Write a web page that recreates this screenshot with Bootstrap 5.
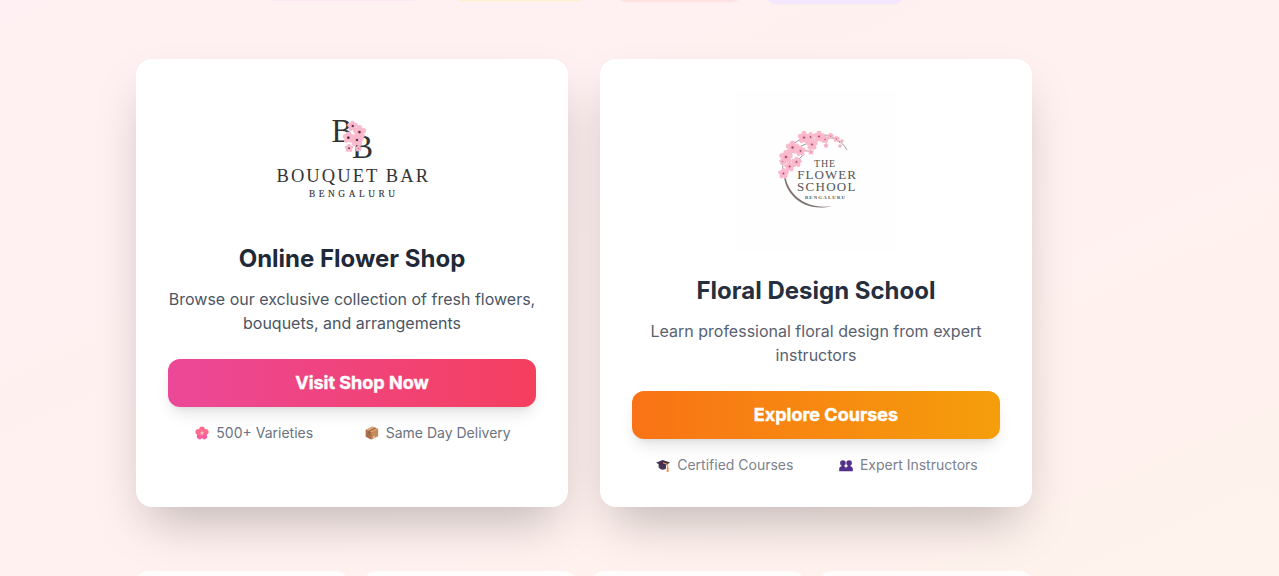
<!DOCTYPE html>
<html lang="en">
<head>
<meta charset="utf-8">
<meta name="viewport" content="width=device-width, initial-scale=1">
<title>Bouquet Bar Bengaluru</title>
<link href="https://cdn.jsdelivr.net/npm/bootstrap@5.3.0/dist/css/bootstrap.min.css" rel="stylesheet">
<style>
  body { font-family: Inter, sans-serif; background: linear-gradient(155deg, #fff0f3 0%, #fff1f0 45%, #fff3ed 100%); height: 576px; overflow: hidden; color: #1f2937; }
  .page-wrap { width: 896px; margin-left: 136px; }
  .tag-row { height: 59px; gap: 32px; padding-left: 128px; }
  .tag { height: 40px; border-radius: 12px; box-shadow: 0 1px 2px rgba(0,0,0,.02); }
  .tag-pink { width: 159px; margin-top: -39px; background: #fce7f3; }
  .tag-yellow { width: 140px; margin-top: -39px; margin-left: -5px; background: #fef0c7; }
  .tag-red { width: 128px; margin-top: -38px; background: #ffe1e2; margin-left: -7px; }
  .tag-purple { width: 140px; margin-top: -36px; background: #f3e8ff; margin-left: -10px; }
  .tag-pink, .tag-yellow { box-shadow: none; }
  .offer { width: 432px; height: 448px; padding: 32px; border: 0; border-radius: 16px; box-shadow: 0 25px 50px -12px rgba(0,0,0,.25); }
  .offer h2 { font-size: 24px; line-height: 32px; font-weight: 700; margin: 24px 0 12px; }
  .offer p { font-size: 16px; line-height: 24px; color: #4b5563; margin: 0 0 24px; }
  .offer .btn { height: 48px; border: 0; border-radius: 12px; color: #fff; font-size: 18px; line-height: 28px; font-weight: 700; -webkit-text-stroke: .4px #fff; padding: 10px 0 10px 20px; box-shadow: 0 10px 15px -3px rgba(0,0,0,.1), 0 4px 6px -4px rgba(0,0,0,.1); }
  .btn-shop { background: linear-gradient(90deg, #ec4899, #f43f5e); }
  .btn-school { background: linear-gradient(90deg, #f97316, #f59e0b); }
  .perks { font-size: 14px; line-height: 20px; color: #6b7280; margin-top: 16px; padding-left: 1px; }
  .perks svg { width: 14px; height: 14px; margin: 0 7px 0 1px; }
  .soft h2 { color: #262f3e; }
  .soft p { color: #59616e; }
  .soft .perks { color: #7b818d; }
  .logo-serif { font-family: "Liberation Serif", serif; fill: #333; }
  .tile-row { margin-top: 64px; height: 5px; overflow: hidden; }
  .tile { height: 80px; border-radius: 12px; background: #fffdfc; }
</style>
</head>
<body>
<svg width="0" height="0" class="position-absolute">
  <symbol id="bloom" viewBox="-10 -10 20 20">
    <g fill="#fab9cc">
      <ellipse cy="-5.3" rx="4" ry="4.6"/>
      <ellipse cy="-5.3" rx="4" ry="4.6" transform="rotate(72)"/>
      <ellipse cy="-5.3" rx="4" ry="4.6" transform="rotate(144)"/>
      <ellipse cy="-5.3" rx="4" ry="4.6" transform="rotate(216)"/>
      <ellipse cy="-5.3" rx="4" ry="4.6" transform="rotate(288)"/>
    </g>
    <circle r="3" fill="#f3a0ba"/><circle r="1.3" fill="#7a4352"/>
  </symbol>
</svg>
<div class="page-wrap">
  <div class="tag-row d-flex">
    <div class="tag tag-pink"></div><div class="tag tag-yellow"></div><div class="tag tag-red"></div><div class="tag tag-purple"></div>
  </div>
  <main class="d-flex" style="gap:32px">
    <section class="card offer text-center">
      <svg class="mx-auto d-block" width="192" height="128" viewBox="256 91 192 128">
        <g class="logo-serif">
          <text x="331.5" y="142" font-size="33" textLength="21" lengthAdjust="spacingAndGlyphs">B</text>
          <text x="352" y="158" font-size="33" textLength="21" lengthAdjust="spacingAndGlyphs">B</text>
          <text x="276.5" y="182.3" font-size="18.5" textLength="151.5" lengthAdjust="spacing">BOUQUET BAR</text>
          <text x="309" y="197.3" font-size="9.3" textLength="86" lengthAdjust="spacing" stroke="#333" stroke-width=".15">BENGALURU</text>
        </g>
        <g>
        <use href="#bloom" x="347" y="120.5" width="11" height="11"/>
        <use href="#bloom" x="352.5" y="125" width="14" height="14"/>
        <use href="#bloom" x="342.5" y="131.5" width="12" height="12"/>
        <use href="#bloom" x="350" y="133" width="14" height="14"/>
        <use href="#bloom" x="344.5" y="143.5" width="9" height="9"/>
        <use href="#bloom" x="355" y="145" width="7" height="7"/>
        </g>
        <g fill="#443039"><circle cx="352.8" cy="126" r="1"/><circle cx="359.5" cy="132.2" r="1.1"/><circle cx="348.3" cy="137.8" r="1.2"/><circle cx="357" cy="140" r="1"/><circle cx="349" cy="148.3" r=".8"/></g>
      </svg>
      <h2>Online Flower Shop</h2>
      <p>Browse our exclusive collection of fresh flowers, bouquets, and arrangements</p>
      <a class="btn btn-shop w-100" href="#">Visit Shop Now</a>
      <div class="perks d-flex justify-content-around">
        <span class="d-flex align-items-center"><svg viewBox="0 0 14 14">
          <g fill="#fb6c8e" transform="translate(7 7.2)"><circle cy="-3.9" r="2.9"/><circle cy="-3.9" r="2.9" transform="rotate(72)"/><circle cy="-3.9" r="2.9" transform="rotate(144)" fill="#f85fa0"/><circle cy="-3.9" r="2.9" transform="rotate(216)" fill="#f85fa0"/><circle cy="-3.9" r="2.9" transform="rotate(288)"/><circle r="2.8"/></g>
          <path d="M7 5v2.2M5 6.5l2 .7 2-.7M5.8 8.9L7 7.2l1.2 1.7" stroke="#ffd3df" stroke-width=".6" fill="none"/><circle cx="7" cy="7.2" r=".8" fill="#ffe6e9"/></svg>500+ Varieties</span>
        <span class="d-flex align-items-center"><svg viewBox="0 0 14 14">
          <path d="M.8 3.8L7.6.6 13.2 3v7.2l-6.8 3.4L.8 10.7z" fill="#c58a5c"/>
          <path d="M.8 3.8l5.6 2.5v7.3L.8 10.7z" fill="#a97048"/><path d="M.8 3.8L7.6.6 13.2 3 6.4 6.3z" fill="#dda577"/>
          <path d="M3.5 5l6.7-3.3 1.1.5-6.6 3.3v2.3l-1.2-.6z" fill="#8b5738"/><path d="M8 10.7l1.8-.9v1.4l-1.8.9z" fill="#f0d5bd"/></svg>Same Day Delivery</span>
      </div>
    </section>
    <section class="card offer soft text-center">
      <svg class="mx-auto d-block" width="160" height="160" viewBox="736 91 160 160">
        <rect x="736" y="91" width="160" height="160" fill="#fefefe"/>
        <path d="M784 177C778 155 793 137 816 135C831 133 842 141 847 150M785 163C792 147 806 143 824 139M784 176C790 162 795 164 802 156M825 137Q837 138 840 143M787 153Q799 149 809 151" fill="none" stroke="#8a7e7d" stroke-width=".8"/>
        <path d="M784 168C781 193 804 213.5 832 206C807 210 786.5 195 785 173z" fill="#7c7371"/>
        <g>
          <use href="#bloom" x="778" y="168" width="11" height="11"/><use href="#bloom" x="784" y="161" width="11" height="11"/>
          <use href="#bloom" x="791" y="156.5" width="11" height="11"/><use href="#bloom" x="779" y="150" width="14" height="14"/>
          <use href="#bloom" x="779" y="158" width="7" height="7"/><use href="#bloom" x="785.5" y="140.5" width="14" height="14"/>
          <use href="#bloom" x="795" y="145.5" width="11" height="11"/><use href="#bloom" x="797.5" y="131" width="13" height="13"/>
          <use href="#bloom" x="805.5" y="132" width="10" height="10"/><use href="#bloom" x="806" y="138.5" width="12" height="12"/>
          <use href="#bloom" x="813" y="130.5" width="12" height="12"/><use href="#bloom" x="821" y="135.5" width="8" height="8"/>
          <use href="#bloom" x="827" y="132.5" width="7" height="7"/><use href="#bloom" x="833" y="135.5" width="7" height="7"/>
          <use href="#bloom" x="808" y="149" width="6" height="6"/><use href="#bloom" x="823.5" y="143" width="5" height="5"/>
          <use href="#bloom" x="838" y="144" width="4" height="4"/><use href="#bloom" x="840" y="139" width="4" height="4"/>
        </g>
        <g class="logo-serif" style="fill:#555">
          <text x="814" y="166.5" font-size="10" textLength="21" lengthAdjust="spacing">THE</text>
          <text x="797.3" y="178.9" font-size="13" textLength="58.5" lengthAdjust="spacing">FLOWER</text>
          <text x="797" y="190.8" font-size="13" textLength="58.5" lengthAdjust="spacing">SCHOOL</text>
          <text x="805" y="199" font-size="4.8" font-weight="700" textLength="40" lengthAdjust="spacing">BENGALURU</text>
        </g>
      </svg>
      <h2>Floral Design School</h2>
      <p>Learn professional floral design from expert instructors</p>
      <a class="btn btn-school w-100" href="#">Explore Courses</a>
      <div class="perks d-flex justify-content-around">
        <span class="d-flex align-items-center"><svg viewBox="0 0 14 14">
          <path d="M2.6 6v3.5q3.4 4 7.4 1V6z" fill="#4a3655"/><path d="M0 4.8L6.6 2 14 4.5 8.2 8.8z" fill="#40304d"/>
          <path d="M7 4.8l4.6 1.6v4" fill="none" stroke="#ef9852" stroke-width="1.2"/><path d="M10.9 9.5h1.5l.4 4.3h-2.2z" fill="#f08d4c"/></svg>Certified Courses</span>
        <span class="d-flex align-items-center"><svg viewBox="0 0 14 14">
          <g fill="#533089"><circle cx="3.9" cy="5" r="2.8"/><circle cx="10.1" cy="5" r="2.8"/><path d="M2.6 6h2.6v2.2q1.8.3 1.8 2.6V13.2H.2v-2.4q0-2.2 2.4-2.6zM8.8 6h2.6v2.2q2.4.4 2.4 2.6V13.2H7v-2.4q0-2.3 1.8-2.6z"/></g></svg>Expert Instructors</span>
      </div>
    </section>
  </main>
  <div class="row row-cols-4 gx-3 tile-row">
    <div class="col"><div class="tile"></div></div><div class="col"><div class="tile"></div></div><div class="col"><div class="tile"></div></div><div class="col"><div class="tile"></div></div>
  </div>
</div>
<script src="https://cdn.jsdelivr.net/npm/bootstrap@5.3.0/dist/js/bootstrap.bundle.min.js"></script>
</body>
</html>
